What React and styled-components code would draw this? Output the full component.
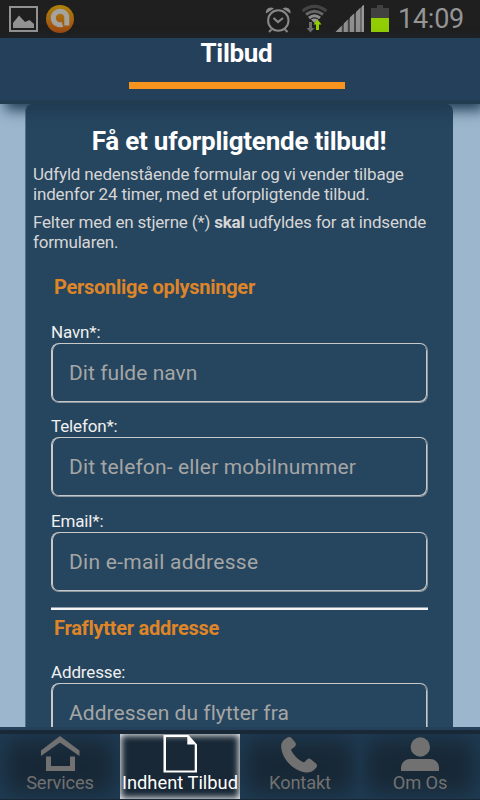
import React from "react";
import styled, { createGlobalStyle } from "styled-components";

const GlobalStyle = createGlobalStyle`
  * { box-sizing: border-box; }
  html, body { margin: 0; padding: 0; overflow: hidden; }
  body { font-family: Roboto, "Liberation Sans", sans-serif; background: #9bb6cd; }
`;

const Screen = styled.div`
  width: 480px;
  height: 800px;
  display: flex;
  flex-direction: column;
  overflow: hidden;
  background: #9bb6cd;
`;

const StatusBar = styled.div`
  height: 38px;
  flex: none;
  display: flex;
  justify-content: space-between;
  background: #1f1f1f;
`;

const StatusIcons = styled.svg`
  display: block;
  flex: none;
`;

const StatusRight = styled.div`
  display: flex;
  width: 218px;
`;

const Clock = styled.span`
  font-size: 27px;
  line-height: 38px;
  letter-spacing: -0.25px;
  color: #959595;
  white-space: nowrap;
`;

const Header = styled.header`
  height: 66px;
  flex: none;
  display: flex;
  flex-direction: column;
  align-items: center;
  background: #25405a;
  border-bottom: 4px solid #223c51;
  box-shadow: 5px 6px 13px 0 #1e3a52;
  position: relative;
  z-index: 1;
`;

const Title = styled.h1`
  margin: 0;
  padding-right: 7px;
  height: 44px;
  font-size: 26px;
  line-height: 30px;
  font-weight: 700;
  letter-spacing: -0.3px;
  color: #fff;
`;

const TitleBar = styled.div`
  width: 216px;
  height: 7px;
  margin-left: -6px;
  background: #f7941e;
`;

const Content = styled.main`
  height: 623px;
  flex: none;
  overflow: hidden;
  padding: 0 27px 0 25px;
`;

const Panel = styled.section`
  height: 720px;
  padding: 21px 7px 0;
  border-left: 1px solid #55738d;
  border-radius: 7px 7px 0 0;
  background: #26455e;
`;

const PanelTitle = styled.h2`
  margin: 0;
  font-size: 26px;
  line-height: 32px;
  font-weight: 700;
  text-align: center;
  white-space: nowrap;
  letter-spacing: -0.23px;
  padding-right: 1px;
  color: #fff;
`;

const Paragraph = styled.p`
  margin: ${(p) => p.$top} 0 0;
  font-size: 17px;
  line-height: 20px;
  letter-spacing: ${(p) => p.$spacing};
  white-space: nowrap;
  color: #d6d6d6;
`;

const Form = styled.form`
  width: 377px;
  margin: ${(p) => p.$top} 0 0 18px;
`;

const Legend = styled.h3`
  margin: ${(p) => p.$top || "0"} 0 0 3px;
  font-size: 20px;
  line-height: 24px;
  font-weight: 700;
  letter-spacing: -0.27px;
  color: #de8529;
`;

const Label = styled.label`
  display: block;
  margin-top: ${(p) => p.$top};
  font-size: 17px;
  line-height: 20px;
  letter-spacing: -0.15px;
  color: #f0f0f0;
`;

const Input = styled.input`
  display: block;
  width: 377px;
  height: 60px;
  margin: 1px 0 0;
  padding: 0 17px;
  border: 1px solid #c9c9c9;
  border-right-color: #8b979f;
  border-bottom-color: #8b979f;
  border-radius: 8px;
  box-shadow: inset 1px 0 0 #c9c9c9, inset -1px -1px 0 #c5c7c8;
  outline: none;
  background: transparent;
  font-family: Roboto, "Liberation Sans", sans-serif;
  font-size: 21px;
  letter-spacing: ${(p) => p.$spacing || "0.05px"};
  &::placeholder { color: #a5a5a5; opacity: 1; }
`;

const Divider = styled.div`
  height: 3px;
  margin-top: 15px;
  border-top: 1px solid #8f9eaa;
  background: #f4f4f4;
`;

const Footer = styled.footer`
  height: 73px;
  flex: none;
  border-top: 3px solid #25405a;
  background: #182836;
  padding: 4px 0 1px;
`;

const Tabs = styled.nav`
  display: grid;
  grid-template-columns: repeat(4, 120px);
  height: 65px;
`;

const Tab = styled.a`
  display: flex;
  flex-direction: column;
  align-items: center;
  height: 65px;
  background: #182836;
  box-shadow: ${(p) => (p.$active ? "inset 0 0 7px 1px #fff" : "inset 0 0 24px 4px #203e57")};
  color: ${(p) => (p.$active ? "#fff" : "#717171")};
`;

const TabIcon = styled.svg`
  display: block;
  width: 40px;
  height: 38px;
  flex: none;
`;

const TabLabel = styled.span`
  font-size: 18.3px;
  line-height: 22px;
  white-space: nowrap;
  letter-spacing: ${(p) => p.$spacing || "-0.15px"};
`;

function NotificationIcons() {
  return (
    <StatusIcons width="90" height="38" viewBox="0 0 90 38">
      <defs>
        <linearGradient id="badge" x1="0" y1="0" x2="0" y2="1">
          <stop offset="0" stopColor="#ae840b" />
          <stop offset="1" stopColor="#9e4811" />
        </linearGradient>
      </defs>
      <rect x="10" y="7" width="27" height="24" fill="none" stroke="#929292" strokeWidth="2" />
      <path d="M13 28V23L19 15.500L25 22L29.500 20L34 24V28Z" fill="#929292" />
      <circle cx="60" cy="19" r="14" fill="url(#badge)" />
      <path d="M62.500 24.300A6.800 6.800 0 1 1 66.800 19V25.500" fill="none" stroke="#a5a3a0" strokeWidth="5" />
    </StatusIcons>
  );
}

function SystemIcons() {
  return (
    <StatusIcons width="136" height="38" viewBox="262 0 136 38">
      <g fill="none" stroke="#888" strokeWidth="2">
        <circle cx="278.300" cy="20.500" r="10.200" />
        <path d="M273.500 18L278 22L283 18" strokeWidth="2.200" />
        <path d="M271.500 29.500L269 32M285 29.500L287.500 32" />
      </g>
      <path d="M266 13.500C265 9 270 5.500 274 8.500ZM290.500 13.500C291.500 9 286.500 5.500 282.500 8.500Z" fill="#888" />
      <g fill="none" strokeWidth="3">
        <path d="M302.500 11Q314.500 1.800 326.500 11" stroke="#444" />
        <path d="M306 14.500Q314.500 8 323 14.500" stroke="#666" />
        <path d="M309 18Q314.500 13.500 320 18" stroke="#8c8c8c" />
      </g>
      <path d="M311 19.500Q314.500 17.500 318 19.500L314.500 23Z" fill="#999" />
      <path d="M309 22H312V28H314.500L310.500 32.500L306.500 28H309Z" fill="#6c6c6c" />
      <path d="M316 30V24.500H313.500L317.500 19.500L321.500 24.500H319V30Z" fill="#91ce04" />
      <path d="M335.500 32L341.800 25.500V32ZM343.800 23.500L347.800 19.500V32H343.800ZM349.800 17.500L354 13.500V32H349.800ZM356 12L360.500 7.500V32H356ZM362 6L364 5V32H362Z" fill="#929292" />
      <path d="M341 26.500L364 5V32H341Z" fill="#8a8a8a" opacity=".35" />
      <path d="M361.500 7.500L364 5V32H361.500Z" fill="#999" />
      <path d="M377 5H383V8H389V18H371V8H377Z" fill="#414141" />
      <rect x="371" y="18" width="18" height="14" fill="#91ce04" />
    </StatusIcons>
  );
}

const icons = {
  home: (
    <>
      <path d="M1 22V16.500L20 2L39.500 16.500V22L20 8.500Z" />
      <path d="M6 22.500H11V32H30V22.500H35V37H6Z" />
    </>
  ),
  page: (
    <path
      fillRule="evenodd"
      d="M3.500 1H28.500L37 10.500V38.500H3.500ZM6 3V36.500H34.700V10.500H27.300V3Z"
    />
  ),
  phone: (
    <path d="M8 3.300C3.500 5.500 .8 9 1.200 13C2 25.500 14 37 25.500 38.500C29.500 39 33 37.500 36 34C37.300 32.500 37.300 30.800 36 29.500L30.500 25C29 24 27.800 24.500 26.500 26L24 28.500C18.500 26.500 12.500 20 11 15.500L14.500 13C16 11.800 16.300 10.500 15.300 8.500L11.500 4C10.500 2.900 9.300 2.700 8 3.300Z" />
  ),
  person: (
    <>
      <circle cx="20.300" cy="13" r="9.700" />
      <path d="M1 37V34C1 28.500 5.500 25 10 25H30C35 25 39 28.500 39 34V37Z" />
    </>
  ),
};

const tabs = [
  { label: "Services", icon: "home" },
  { label: "Indhent Tilbud", icon: "page", active: true, spacing: "0.02px" },
  { label: "Kontakt", icon: "phone" },
  { label: "Om Os", icon: "person" },
];

export default function App() {
  return (
    <Screen>
      <GlobalStyle />
      <StatusBar>
        <NotificationIcons />
        <StatusRight>
          <SystemIcons />
          <Clock>14:09</Clock>
        </StatusRight>
      </StatusBar>
      <Header>
        <Title>Tilbud</Title>
        <TitleBar />
      </Header>
      <Content>
        <Panel>
          <PanelTitle>Få et uforpligtende tilbud!</PanelTitle>
          <Paragraph $top="7px" $spacing="-0.17px">
            Udfyld nedenstående formular og vi vender tilbage
            <br />
            indenfor 24 timer, med et uforpligtende tilbud.
          </Paragraph>
          <Paragraph $top="8px" $spacing="-0.2px">
            Felter med en stjerne (*) <b>skal</b> udfyldes for at indsende
            <br />
            formularen.
          </Paragraph>
          <Form $top="23px">
            <Legend>Personlige oplysninger</Legend>
            <Label $top="23px">Navn*:</Label>
            <Input placeholder="Dit fulde navn" />
            <Label $top="13px">Telefon*:</Label>
            <Input placeholder="Dit telefon- eller mobilnummer" $spacing="0.15px" />
            <Label $top="14px">Email*:</Label>
            <Input placeholder="Din e-mail addresse" $spacing="0.29px" />
            <Divider />
            <Legend $top="6px">Fraflytter addresse</Legend>
            <Label $top="22px">Addresse:</Label>
            <Input placeholder="Addressen du flytter fra" />
          </Form>
        </Panel>
      </Content>
      <Footer>
        <Tabs>
          {tabs.map((t) => (
            <Tab key={t.label} $active={t.active}>
              <TabIcon viewBox="0 0 40 38" fill="currentColor" overflow="visible">
                {icons[t.icon]}
              </TabIcon>
              <TabLabel $spacing={t.spacing}>{t.label}</TabLabel>
            </Tab>
          ))}
        </Tabs>
      </Footer>
    </Screen>
  );
}
